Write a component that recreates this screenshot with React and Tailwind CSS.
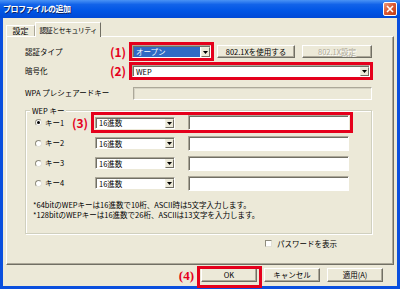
import React from 'react';

function CloseButton() {
  return (
    <div className="w-[14px] h-[14px] rounded-[2px] border border-white bg-[linear-gradient(135deg,#ec9a7e_0%,#dc5a34_45%,#c13d17_100%)] flex items-center justify-center">
      <svg width="8" height="8" viewBox="0 0 8 8">
        <path d="M1 1L7 7M7 1L1 7" stroke="#fff" strokeWidth="1.6" />
      </svg>
    </div>
  );
}

function Arrow() {
  return (
    <span className="flex w-[9px] items-center justify-center bg-[#ece9d8] border border-[#f1efe2] border-r-[#716f64] border-b-[#716f64]">
      <svg width="5" height="3" viewBox="0 0 5 3">
        <path d="M0 0h5L2.5 3z" fill="#000" />
      </svg>
    </span>
  );
}

function Select({ value, className = '', highlight }) {
  return (
    <div className={`flex items-stretch bg-white border border-[#aca899] border-b-white border-r-white shadow-[inset_1px_1px_0_#716f64] pt-px pl-px ${className}`}>
      <span className={`flex-1 flex items-center pl-[2px] ${highlight ? 'bg-[#316ac5] text-white mr-px' : ''}`}>{value}</span>
      <Arrow />
    </div>
  );
}

function Field({ className = '', disabled }) {
  return (
    <div
      className={`border border-[#aca899] border-b-white border-r-white ${disabled ? 'bg-[#ece9d8] shadow-[inset_1px_1px_0_#d6d3c4]' : 'bg-white shadow-[inset_1px_1px_0_#716f64]'} ${className}`}
    />
  );
}

function Btn({ children, className = '', disabled }) {
  return (
    <button
      type="button"
      className={`flex items-center justify-center bg-[#ece9d8] border border-white border-r-[#716f64] border-b-[#716f64] shadow-[inset_-1px_-1px_0_#aca899] ${disabled ? 'text-[#aca899] [text-shadow:1px_1px_0_#fff]' : 'text-black'} ${className}`}
    >
      {children}
    </button>
  );
}

function Mark({ children }) {
  return (
    <span className="w-[19px] text-[12px] font-bold text-[#e5001c] leading-none">{children}</span>
  );
}

function Radio({ checked }) {
  return (
    <span className="w-[7px] h-[7px] shrink-0 rounded-full bg-white border border-[#8f8c7e] border-b-[#e2e0d6] border-r-[#e2e0d6] flex items-center justify-center">
      {checked && <span className="w-[3px] h-[3px] rounded-full bg-black" />}
    </span>
  );
}

function KeyRow({ n, active }) {
  return (
    <div className={`flex items-center pl-[9px] ${active ? 'h-[21px]' : 'h-[20px]'}`}>
      <Radio checked={active} />
      <span className="ml-[3px] w-[27px]">キー{n}</span>
      <Mark>{active ? '(3)' : ''}</Mark>
      <div
        className={`h-full w-[262px] border-[3px] flex items-center pl-px ${active ? 'border-[#e5001c]' : 'border-transparent'}`}
      >
        <Select value="16進数" className="w-[80px] h-[12px]" />
        <Field className="ml-[13px] w-[161px] h-[15px] shrink-0" />
      </div>
    </div>
  );
}

export default function App() {
  return (
    <div className="w-[400px] h-[289px] bg-[#0a4fde] flex flex-col overflow-hidden font-['Noto_Sans_CJK_JP',sans-serif] text-[7.5px] leading-none text-black">
      <div className="h-[18px] shrink-0 flex items-center justify-between pl-[3px] pr-[3px] bg-[linear-gradient(180deg,#4a93f5_0%,#1263e9_25%,#0055e5_60%,#0049d6_100%)]">
        <span className="text-white font-bold text-[8px] tracking-[-0.5px] [text-shadow:1px_1px_0_#0a246a]">
          プロファイルの追加
        </span>
        <CloseButton />
      </div>

      <div className="flex-1 mx-[3px] mb-[3px] bg-[#ece9d8] flex flex-col">
        {/* tabs */}
        <div className="flex items-start h-[14px] mt-[4px] pl-[3px]">
          <div className="mt-[3px] h-[11px] w-[29px] flex items-center justify-center text-[8px] border-t border-l border-white border-r border-r-[#aca899]">
            設定
          </div>
          <div className="relative z-10 h-[15px] w-[66px] flex items-center justify-center bg-[#ece9d8] text-[7px] tracking-[-0.6px] border-t border-l border-white border-r border-r-[#716f64]">
            認証とセキュリティ
          </div>
        </div>

        {/* tab panel */}
        <div className="mx-[3px] h-[229px] border border-white border-r-[#716f64] border-b-[#716f64] shadow-[inset_-1px_-1px_0_#aca899] pl-[18px] pt-[5px] flex flex-col">
          <div className="flex items-center h-[19px]">
            <span className="w-[85px]">認証タイプ</span>
            <Mark>(1)</Mark>
            <div className="w-[85px] h-full border-[3px] border-[#e5001c] flex items-center">
              <Select value="オープン" highlight className="w-full h-[13px]" />
            </div>
            <Btn className="ml-[3px] w-[78px] h-[13px]">802.1Xを使用する</Btn>
            <Btn disabled className="ml-[7px] w-[70px] h-[13px]">802.1X設定</Btn>
          </div>

          <div className="flex items-center h-[18px] mt-px">
            <span className="w-[85px]">暗号化</span>
            <Mark>(2)</Mark>
            <div className="w-[244px] h-full border-[3px] border-[#e5001c] flex items-center">
              <Select value="WEP" className="w-full h-[12px]" />
            </div>
          </div>

          <div className="flex items-center h-[14px] mt-[6px]">
            <span className="w-[108px]">WPA プレシェアードキー</span>
            <Field disabled className="w-[239px] h-[13px]" />
          </div>

          <div className="relative mt-[10px] w-[347px] h-[124px] border border-[#d0d0bf] shadow-[inset_1px_1px_0_#fff,1px_1px_0_#fff] pt-px flex flex-col">
            <span className="absolute -top-[5px] left-[4px] bg-[#ece9d8] px-[2px] leading-[9px]">WEP キー</span>
            <KeyRow n="1" active />
            <KeyRow n="2" />
            <KeyRow n="3" />
            <KeyRow n="4" />
            <div className="mt-[7px] pl-[7px] leading-[10px] text-[7.5px]">
              <p>*64bitのWEPキーは16進数で10桁、ASCII時は5文字入力します。</p>
              <p>*128bitのWEPキーは16進数で26桁、ASCIIは13文字を入力します。</p>
            </div>
          </div>

          <div className="mt-[5px] h-[9px] flex items-center pl-[240px]">
            <span className="w-[7px] h-[7px] bg-white border border-[#8f8c7e] border-b-[#e2e0d6] border-r-[#e2e0d6]" />
            <span className="ml-[5px]">パスワードを表示</span>
          </div>
        </div>

        {/* bottom buttons */}
        <div className="mt-[3px] h-[14px] flex items-center justify-end gap-[7px] pr-[14px]">
          <span className="text-[13px] font-bold text-[#e5001c] font-['Liberation_Serif',serif] leading-none">(4)</span>
          <div className="relative">
            <Btn className="w-[56px] h-[14px]">OK</Btn>
            <span className="absolute -left-[4px] -right-[5px] -top-[2px] -bottom-[6px] border-[3px] border-[#e5001c]" />
          </div>
          <Btn className="w-[56px] h-[14px]">キャンセル</Btn>
          <Btn className="w-[56px] h-[14px]">適用(A)</Btn>
        </div>
      </div>
    </div>
  );
}
